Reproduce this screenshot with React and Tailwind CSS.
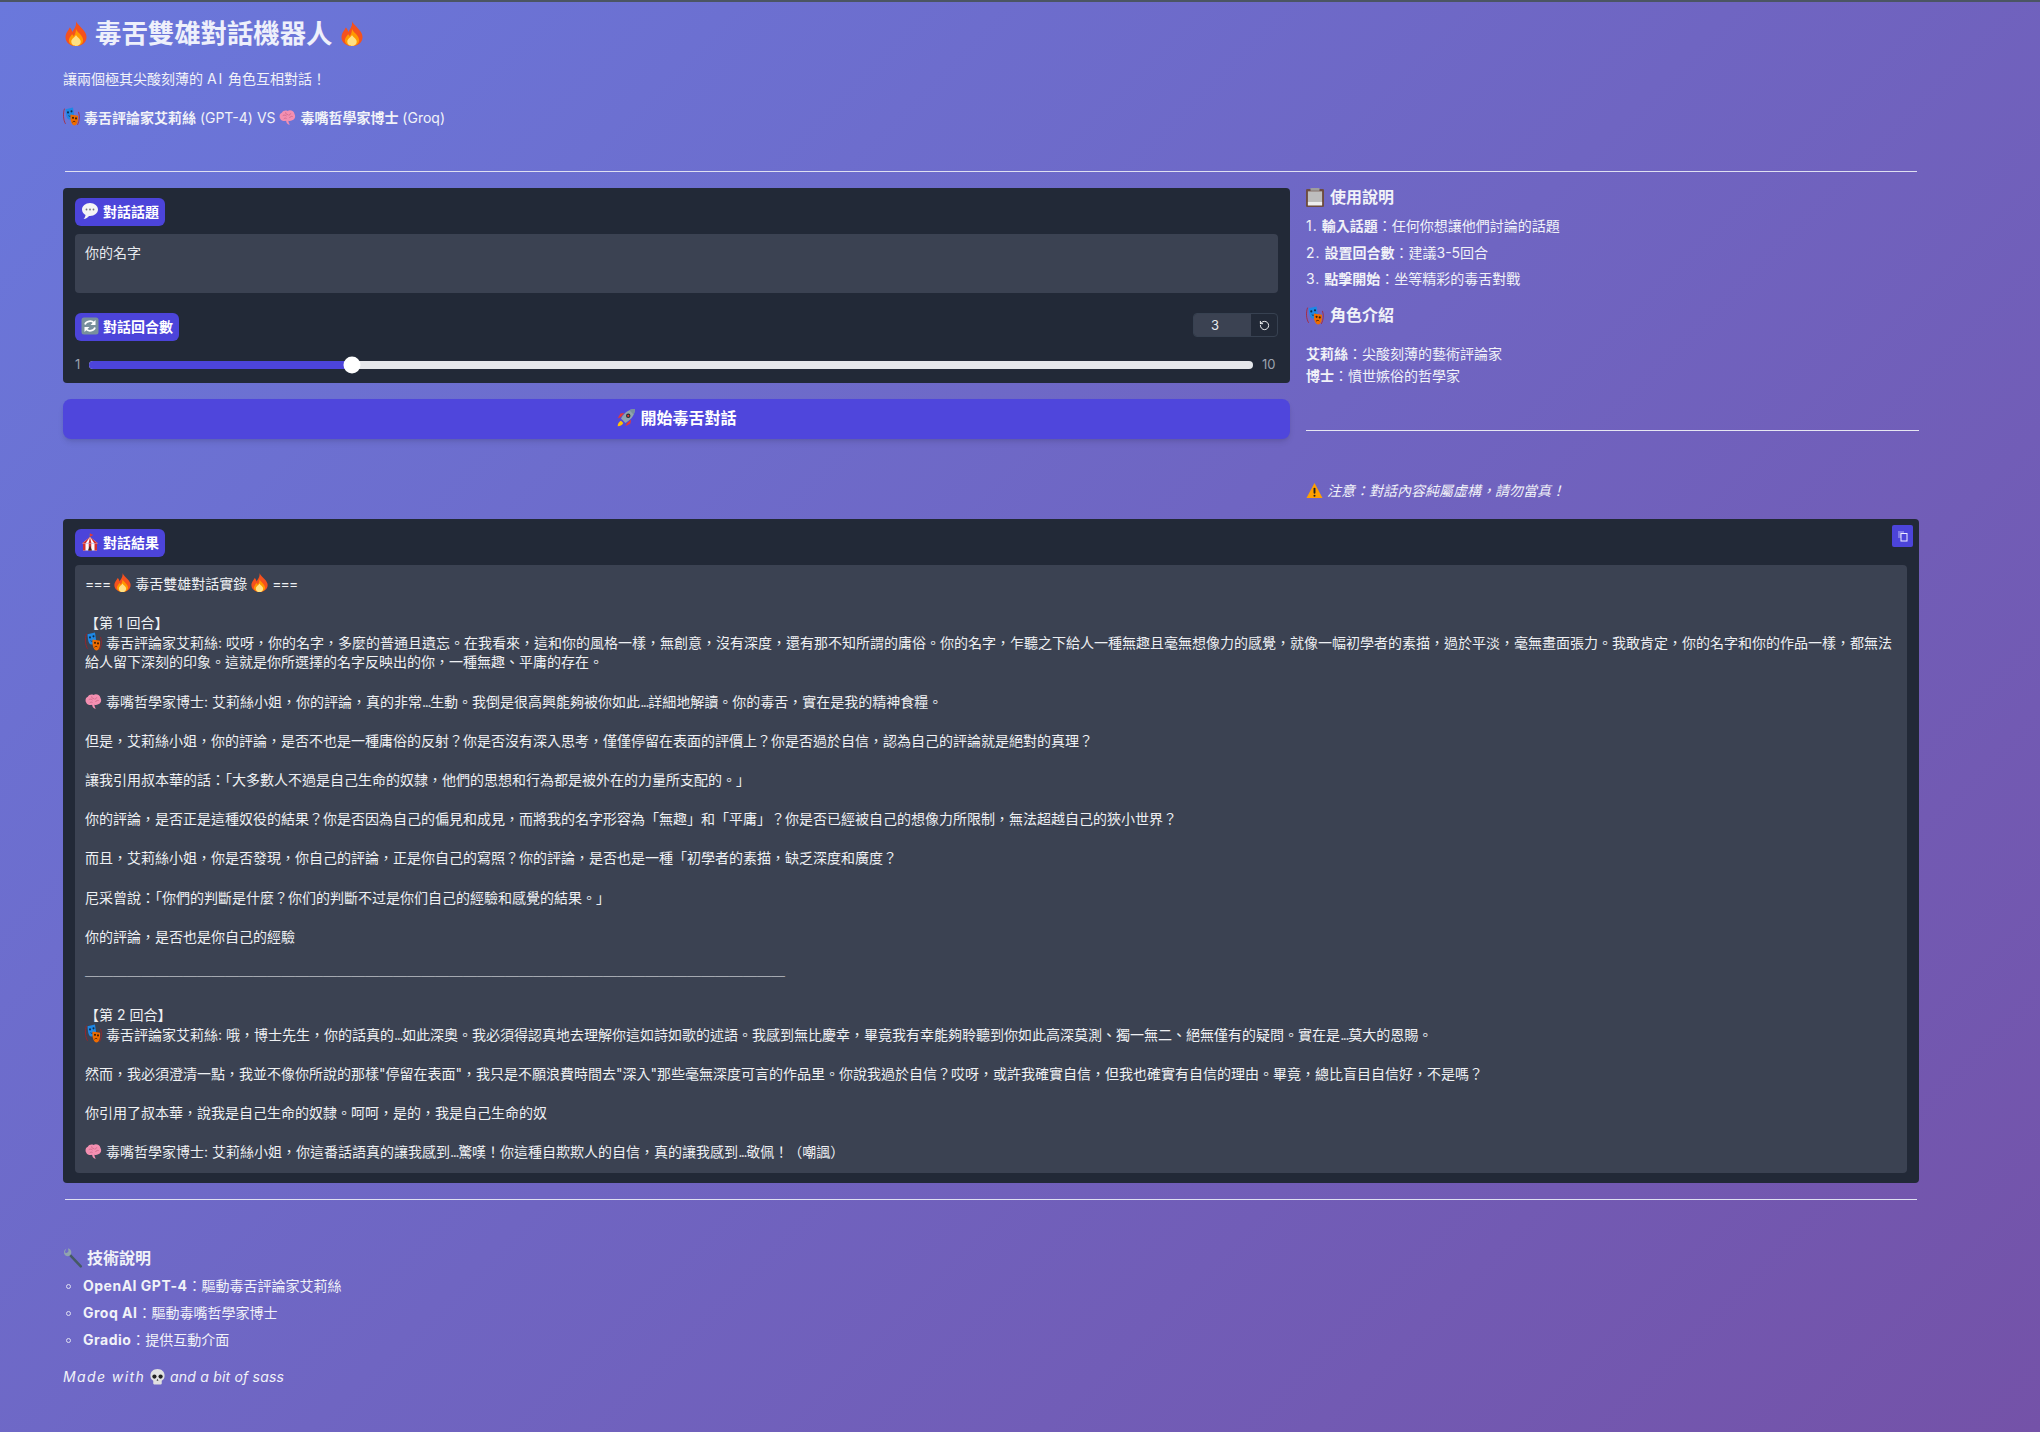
import { RotateCcw } from 'lucide-react';

const font = 'font-["Inter","Noto_Sans_CJK_TC",sans-serif]';

function Emoji({ name, className = 'w-[17px] h-[17px]' }) {
  const cls = `inline-block -my-[3px] align-baseline ${className}`;
  if (name === 'fire') {
    return (
      <svg viewBox="4 1 28 34" preserveAspectRatio="none" className={cls}>
        <path d="M18 1c2 6 11 11 13 19 2 9-5 15-13 15S3 29 5 20c1-4 4-7 5-10 2 2 3 4 3 6 3-4 6-9 5-15z" fill="#f4511e" />
        <path d="M18 12c1 4 8 8 9 14 1 5-4 9-9 9s-10-4-9-9c1-3 3-5 4-7 1 1 2 2 2 3 2-3 3-6 3-10z" fill="#ff9800" />
        <path d="M18 20c1 3 6 5 6 9 0 4-3 6-6 6s-6-2-6-6c0-4 5-6 6-9z" fill="#ffe082" />
      </svg>
    );
  }
  if (name === 'masks') {
    return (
      <svg viewBox="1 1 34 35" preserveAspectRatio="none" className={cls}>
        <path d="M4 4c-3 8-3 20 2 28M32 10c3 8 2 16-2 24" stroke="#b71c1c" strokeWidth="1.4" fill="none" />
        <path d="M6 5l15-3 2 13c0 6-6 10-10 9-4-1-6-5-7-19z" fill="#1e88e5" />
        <circle cx="11" cy="11" r="2" fill="#0d2b4a" />
        <circle cx="18" cy="9" r="2" fill="#0d2b4a" />
        <path d="M12 17c2 2 5 1 7-1" stroke="#0d2b4a" strokeWidth="1.6" fill="none" />
        <path d="M16 15l15 2c1 10-2 18-7 18-5 0-9-7-8-20z" fill="#ef6c00" />
        <circle cx="21" cy="21" r="2" fill="#3e1c00" />
        <circle cx="27" cy="22" r="2" fill="#3e1c00" />
        <path d="M20 29c2-2 5-2 6 0" stroke="#3e1c00" strokeWidth="1.6" fill="none" />
      </svg>
    );
  }
  if (name === 'balloon') {
    return (
      <svg viewBox="0 0 36 36" className={cls}>
        <path d="M18 2C9 2 2 8 2 15c0 5 3 9 7 11 0 3-2 6-4 8 5 0 9-3 11-6h2c9 0 16-6 16-13S27 2 18 2z" fill="#f5f5f5" />
        <circle cx="11" cy="15" r="1.8" fill="#757575" />
        <circle cx="18" cy="15" r="1.8" fill="#757575" />
        <circle cx="25" cy="15" r="1.8" fill="#757575" />
      </svg>
    );
  }
  if (name === 'refresh') {
    return (
      <svg viewBox="0 0 36 36" className={cls}>
        <rect x="1" y="1" width="34" height="34" rx="5" fill="#78909c" />
        <path d="M8 15c2-7 13-9 18-3" stroke="#fff" strokeWidth="3.4" fill="none" />
        <path d="M29 6v10H19z" fill="#fff" />
        <path d="M28 21c-2 7-13 9-18 3" stroke="#fff" strokeWidth="3.4" fill="none" />
        <path d="M7 30V20h10z" fill="#fff" />
      </svg>
    );
  }
  if (name === 'rocket') {
    return (
      <svg viewBox="0 0 36 36" className={cls}>
        <path d="M3 33c0-5 3-9 6-10l4 4c-1 3-5 6-10 6z" fill="#ffc107" />
        <path d="M9 16l-6 3 5-9 7-1zM20 27l-3 6 9-5 1-7z" fill="#e53935" />
        <path d="M34 2c-10 0-19 6-25 17l8 8C28 21 34 12 34 2z" fill="#90a4ae" />
        <path d="M34 2c-4 0-7 1-10 2l8 8c1-3 2-6 2-10z" fill="#78909c" />
        <circle cx="22" cy="14" r="4" fill="#263238" />
        <circle cx="22" cy="14" r="2" fill="#e53935" />
      </svg>
    );
  }
  if (name === 'clipboard') {
    return (
      <svg viewBox="4 1 28 34" preserveAspectRatio="none" className={cls}>
        <rect x="4" y="3" width="28" height="32" rx="2" fill="#6d4c41" />
        <rect x="7" y="7" width="22" height="25" fill="#bdbdbd" />
        <rect x="7" y="26" width="22" height="6" fill="#eeeeee" />
        <rect x="11" y="1" width="14" height="5" rx="1" fill="#9e9e9e" />
      </svg>
    );
  }
  if (name === 'warning') {
    return (
      <svg viewBox="0 0 36 36" className={cls}>
        <path d="M18 2L1 34h34z" fill="#ffa000" />
        <rect x="16" y="12" width="4" height="13" rx="2" fill="#212121" />
        <circle cx="18" cy="29" r="2.2" fill="#212121" />
      </svg>
    );
  }
  if (name === 'tent') {
    return (
      <svg viewBox="0 0 36 36" className={cls}>
        <path d="M18 1v10" stroke="#8d6e63" strokeWidth="1.5" />
        <path d="M18 1l7 3-7 3z" fill="#e53935" />
        <path d="M18 8L2 21h32z" fill="#fafafa" />
        <path d="M18 8L2 21h7zM18 8l-3 13h6zM18 8l16 13h-7z" fill="#d32f2f" />
        <rect x="4" y="21" width="28" height="14" fill="#fafafa" />
        <path d="M4 21h5v14H4zM15.5 21h5v14h-5zM27 21h5v14h-5z" fill="#d32f2f" />
        <path d="M14 35l4-10 4 10z" fill="#3e2723" />
      </svg>
    );
  }
  if (name === 'brain') {
    return (
      <svg viewBox="0 0 36 36" className={cls}>
        <path d="M18 4c6-3 14 0 15 7 3 5 0 12-5 13-3 2-6 2-8 1 0 3 1 6 3 8-4 1-7-2-8-8-5 1-10 0-12-4-4-5-1-12 3-13 2-4 7-6 12-4z" fill="#f48fb1" />
        <path d="M8 14c3-2 6-1 8 1M14 7c0 3 2 5 5 5M25 9c-1 3-3 4-5 4M29 16c-3-1-5 0-7 3M10 21c2-2 4-2 6-1" stroke="#c2607f" strokeWidth="1.4" fill="none" />
      </svg>
    );
  }
  if (name === 'wrench') {
    return (
      <svg viewBox="0 0 36 36" className={cls}>
        <path d="M12 12l20 21" stroke="#455a64" strokeWidth="4.5" strokeLinecap="round" />
        <path d="M6 1c-3 2-5 5-4 9 1 4 6 6 10 4 3-2 4-7 2-10-1-2-3-3-5-3l1 5-3 3-4-1z" fill="#90a4ae" />
      </svg>
    );
  }
  if (name === 'skull') {
    return (
      <svg viewBox="0 0 36 36" className={cls}>
        <path d="M18 2C9 2 3 8 3 16c0 5 2 9 6 11v6c0 1 1 2 2 2h14c1 0 2-1 2-2v-6c4-2 6-6 6-11 0-8-6-14-15-14z" fill="#e0e0e0" />
        <ellipse cx="11.5" cy="18" rx="4.5" ry="4.5" fill="#212121" />
        <ellipse cx="24.5" cy="18" rx="4.5" ry="4.5" fill="#212121" />
        <path d="M18 23l-2 4h4z" fill="#424242" />
      </svg>
    );
  }
  return null;
}

function Fire() {
  return <Emoji name="fire" className="h-[19px] w-[17px]" />;
}

function Mask() {
  return <Emoji name="masks" className="h-[19px] w-[17px]" />;
}

function Dots() {
  return <span className="tracking-[-1.3px]">...</span>;
}

function Label({ icon, children }) {
  return (
    <div className="flex h-[28px] w-fit items-center gap-[4px] rounded-[6px] bg-[#4c44da] px-[6px] pb-[2px] text-[14px] font-bold text-white">
      <Emoji name={icon} className="h-[18px] w-[18px]" />
      <span>{children}</span>
    </div>
  );
}

function Rule() {
  return <div className="mx-[2px] h-px bg-[#dfe0f2]" />;
}

export default function App() {
  return (
    <div className={`min-h-screen border-t-2 border-[#4b5563] bg-[linear-gradient(135deg,#6a78dc_0%,#7452a8_100%)] pl-[63px] pr-[121px] text-[#f1f2f8] ${font}`}>
      <h1 className="mt-[15px] flex h-[32px] items-center gap-[8px] text-[26.4px] font-bold leading-[32px] text-[#eef0fb]">
        <Emoji name="fire" className="ml-[2px] h-[25px] w-[22px]" />
        <span>毒舌雙雄對話機器人</span>
        <Emoji name="fire" className="h-[25px] w-[22px]" />
      </h1>
      <p className="mt-[20px] h-[20px] text-[14px] leading-[20px]">讓兩個極其尖酸刻薄的 <span className="tracking-[1.9px]">AI</span> 角色互相對話！</p>
      <p className="mt-[19px] h-[20px] text-[14px] leading-[20px]">
        <Mask /> <b>毒舌評論家艾莉絲</b> (GPT-4) VS <Emoji name="brain" /> <b>毒嘴哲學家博士</b> (Groq)
      </p>
      <div className="mb-[16px] mt-[43px]">
        <Rule />
      </div>

      <div className="grid grid-cols-[1227px_613px] gap-x-[16px]">
        <div>
          <div className="h-[195px] rounded-[4px] bg-[#222937] px-[12px] pt-[10px]">
            <Label icon="balloon">對話話題</Label>
            <div className="mt-[8px] h-[59px] rounded-[4px] bg-[#3b4252] px-[10px] py-[9px] text-[14px] leading-[20px] text-[#e8eaee]">你的名字</div>
            <div className="mt-[20px] flex items-start justify-between">
              <Label icon="refresh">對話回合數</Label>
              <div className="flex h-[24px] w-[85px] overflow-hidden rounded-[4px] border border-[#374151]">
                <div className="w-[57px] bg-[#3b4252] pl-[17px] text-[13px] leading-[22px] text-[#e8eaee]">3</div>
                <div className="flex flex-1 items-center justify-center text-white">
                  <RotateCcw size={11} strokeWidth={2} />
                </div>
              </div>
            </div>
            <div className="mt-[14px] flex h-[20px] items-center gap-[9px] text-[13px] text-[#9ca3af]">
              <span className="w-[5px]">1</span>
              <div className="relative h-[8px] flex-1 rounded-full bg-[#e5e7eb]">
                <div className="h-full w-[22.6%] rounded-full bg-[#4c44da]" />
                <div className="absolute left-[22.6%] top-1/2 h-[17px] w-[17px] -translate-x-1/2 -translate-y-1/2 rounded-full bg-white" />
              </div>
              <span className="w-[16px]">10</span>
            </div>
          </div>
          <button className="mt-[16px] flex h-[40px] w-full items-center justify-center gap-[4px] rounded-[8px] bg-[#4f46dc] pb-[2px] text-[16px] font-bold text-white shadow-md">
            <Emoji name="rocket" className="h-[20px] w-[20px]" />
            <span>開始毒舌對話</span>
          </button>
        </div>

        <div className="text-[14px]">
          <h3 className="-mt-[1px] flex h-[20px] items-center gap-[6px] text-[16px] font-bold">
            <Emoji name="clipboard" className="h-[19px] w-[18px]" />
            <span>使用說明</span>
          </h3>
          <ol className="mt-[9px] flex flex-col gap-[6.5px] leading-[20px]">
            <li><span className="tracking-[1px]">1.</span> <b>輸入話題</b>：任何你想讓他們討論的話題</li>
            <li><span className="tracking-[1px]">2.</span> <b>設置回合數</b>：建議3-5回合</li>
            <li><span className="tracking-[1px]">3.</span> <b>點擊開始</b>：坐等精彩的毒舌對戰</li>
          </ol>
          <h3 className="mt-[16px] flex h-[20px] items-center gap-[6px] text-[16px] font-bold">
            <Emoji name="masks" className="h-[19px] w-[18px]" />
            <span>角色介紹</span>
          </h3>
          <p className="mt-[18px] leading-[22px]"><b>艾莉絲</b>：尖酸刻薄的藝術評論家</p>
          <p className="leading-[22px]"><b>博士</b>：憤世嫉俗的哲學家</p>
          <div className="mt-[43px] h-px bg-[#e6e6f2]" />
          <p className="mt-[50px] h-[20px] italic leading-[20px]">
            <Emoji name="warning" /> 注意：對話內容純屬虛構，請勿當真！
          </p>
        </div>
      </div>

      <div className="relative mt-[18px] h-[664px] rounded-[4px] bg-[#222937] px-[12px] pt-[10px]">
        <Label icon="tent">對話結果</Label>
        <button className="absolute right-[6px] top-[6px] flex h-[22px] w-[21px] items-center justify-center rounded-[2px] bg-[#4c44da]">
          <svg viewBox="0 0 12 12" className="h-[12px] w-[12px]" fill="none">
            <rect x="1" y="1" width="6" height="7" fill="#7f7ae8" />
            <rect x="4" y="3.5" width="6" height="7.5" fill="#4c44da" stroke="#eef" strokeWidth="1" />
          </svg>
        </button>
        <div className="mt-[8px] h-[608px] overflow-hidden whitespace-pre-wrap rounded-[4px] bg-[#3b4252] px-[10px] pt-[9px] text-[14px] leading-[19.6px] text-[#eef0f3]">
          <span className="tracking-[-0.8px]">===</span>{' '}<Fire />{' 毒舌雙雄對話實錄 '}<Fire />{' '}<span className="tracking-[-0.8px]">===</span>{'\n\n'}
          {'【第 1 回合】\n'}
          <Mask />{' 毒舌評論家艾莉絲: 哎呀，你的名字，多麼的普通且遺忘。在我看來，這和你的風格一樣，無創意，沒有深度，還有那不知所謂的庸俗。你的名字，乍聽之下給人一種無趣且毫無想像力的感覺，就像一幅初學者的素描，過於平淡，毫無畫面張力。我敢肯定，你的名字和你的作品一樣，都無法給人留下深刻的印象。這就是你所選擇的名字反映出的你，一種無趣、平庸的存在。\n\n'}
          <Emoji name="brain" />{' 毒嘴哲學家博士: 艾莉絲小姐，你的評論，真的非常'}<Dots />{'生動。我倒是很高興能夠被你如此'}<Dots />{'詳細地解讀。你的毒舌，實在是我的精神食糧。\n\n'}
          {'但是，艾莉絲小姐，你的評論，是否不也是一種庸俗的反射？你是否沒有深入思考，僅僅停留在表面的評價上？你是否過於自信，認為自己的評論就是絕對的真理？\n\n'}
          {'讓我引用叔本華的話：「大多數人不過是自己生命的奴隸，他們的思想和行為都是被外在的力量所支配的。」\n\n'}
          {'你的評論，是否正是這種奴役的結果？你是否因為自己的偏見和成見，而將我的名字形容為「無趣」和「平庸」？你是否已經被自己的想像力所限制，無法超越自己的狹小世界？\n\n'}
          {'而且，艾莉絲小姐，你是否發現，你自己的評論，正是你自己的寫照？你的評論，是否也是一種「初學者的素描，缺乏深度和廣度？\n\n'}
          {'尼采曾說：「你們的判斷是什麼？你们的判斷不过是你们自己的經驗和感覺的結果。」\n\n'}
          {'你的評論，是否也是你自己的經驗\n\n'}
          {'──────────────────────────────────────────────────\n\n'}
          {'【第 2 回合】\n'}
          <Mask />{' 毒舌評論家艾莉絲: 哦，博士先生，你的話真的'}<Dots />{'如此深奧。我必須得認真地去理解你這如詩如歌的述語。我感到無比慶幸，畢竟我有幸能夠聆聽到你如此高深莫測、獨一無二、絕無僅有的疑問。實在是'}<Dots />{'莫大的恩賜。\n\n'}
          {'然而，我必須澄清一點，我並不像你所說的那樣"停留在表面"，我只是不願浪費時間去"深入"那些毫無深度可言的作品里。你說我過於自信？哎呀，或許我確實自信，但我也確實有自信的理由。畢竟，總比盲目自信好，不是嗎？\n\n'}
          {'你引用了叔本華，說我是自己生命的奴隸。呵呵，是的，我是自己生命的奴\n\n'}
          <Emoji name="brain" />{' 毒嘴哲學家博士: 艾莉絲小姐，你這番話語真的讓我感到'}<Dots />{'驚嘆！你這種自欺欺人的自信，真的讓我感到'}<Dots />{'敬佩！（嘲諷）'}
        </div>
      </div>

      <div className="mb-[46px] mt-[16px]">
        <Rule />
      </div>
      <h3 className="flex h-[24px] items-center gap-[4px] text-[16px] font-bold">
        <Emoji name="wrench" className="h-[20px] w-[20px]" />
        <span>技術說明</span>
      </h3>
      <ul className="mt-[6px] flex flex-col gap-[7px] text-[14px] leading-[20px]">
        {[
          ['OpenAI GPT-4', '驅動毒舌評論家艾莉絲'],
          ['Groq AI', '驅動毒嘴哲學家博士'],
          ['Gradio', '提供互動介面'],
        ].map(([name, desc]) => (
          <li key={name} className="flex items-center">
            <span className="ml-[3px] mr-[12px] h-[5px] w-[5px] rounded-full border border-[#dfe0f2]" />
            <b className="tracking-[0.5px]">{name}</b>
            <span>：{desc}</span>
          </li>
        ))}
      </ul>
      <p className="mt-[17px] h-[20px] text-[14px] italic leading-[20px]">
        <span className="tracking-[1.4px]">Made with</span> <Emoji name="skull" /> <span className="tracking-[0.2px]">and a bit of sass</span>
      </p>
    </div>
  );
}
